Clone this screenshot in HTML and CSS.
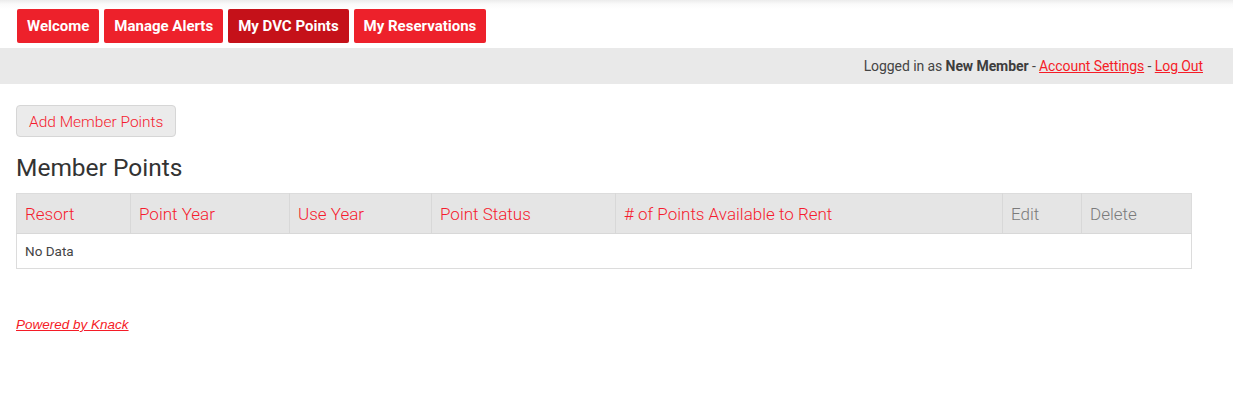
FILE: index.html
```html
<!DOCTYPE html>
<html>
<head>
<meta charset="utf-8">
<link rel="stylesheet" href="styles.css">
</head>
<body>
<header class="top">
  <nav class="nav">
    <a class="nav-btn">Welcome</a>
    <a class="nav-btn">Manage Alerts</a>
    <a class="nav-btn active">My DVC Points</a>
    <a class="nav-btn">My Reservations</a>
  </nav>
</header>
<div class="userbar">
  <span>Logged in as <b>New Member</b> - <a class="link">Account Settings</a> - <a class="link">Log Out</a></span>
</div>
<main class="content">
  <button class="add-btn">Add Member Points</button>
  <h2 class="title">Member Points</h2>
  <table class="grid">
    <colgroup>
      <col class="c1"><col class="c2"><col class="c3"><col class="c4"><col class="c5"><col class="c6"><col class="c7">
    </colgroup>
    <thead>
      <tr>
        <th class="sort">Resort</th>
        <th class="sort">Point Year</th>
        <th class="sort">Use Year</th>
        <th class="sort">Point Status</th>
        <th class="sort"># of Points Available to Rent</th>
        <th class="plain">Edit</th>
        <th class="plain">Delete</th>
      </tr>
    </thead>
    <tbody>
      <tr><td colspan="7">No Data</td></tr>
    </tbody>
  </table>
  <div class="powered"><a class="powered-link">Powered by Knack</a></div>
</main>
</body>
</html>
```
FILE: styles.css
```css
* { box-sizing: border-box; }
html, body { margin: 0; background: #fff; }
body {
  font-family: Roboto, "Noto Sans", sans-serif;
  color: #333;
}
.top {
  padding: 9px 17px 5px;
  background: linear-gradient(to bottom, #ececec 0px, #fafafa 4px, #fff 9px);
}
.nav { display: flex; gap: 5px; }
.nav-btn {
  display: flex;
  align-items: center;
  height: 34px;
  padding: 0 10px;
  background: #ed212b;
  color: #fff;
  font-weight: 700;
  font-size: 15px;
  border-radius: 2px;
  cursor: pointer;
}
.nav-btn.active { background: #c51119; }
.userbar {
  height: 36px;
  background: #e9e9e9;
  display: flex;
  align-items: center;
  justify-content: flex-end;
  padding-right: 30px;
  font-size: 14px;
  color: #444;
}
.userbar span { letter-spacing: -0.08px; }
.userbar b { color: #3d3d3d; }
.link { color: #f51c27; text-decoration: underline; cursor: pointer; }
.content { padding: 21px 16px 0; }
.add-btn {
  display: block;
  height: 32px;
  padding: 1px 12px 0;
  background: #ebebeb;
  border: 1px solid #d6d6d6;
  border-radius: 4px;
  font-family: Roboto, sans-serif;
  font-weight: 300;
  font-size: 15.5px;
  color: #f51c2f;
}
.title {
  margin: 15px 0 0;
  font-size: 24.5px;
  font-weight: 400;
  color: #333;
  line-height: 32px;
}
.grid {
  margin-top: 9px;
  width: 1176px;
  border-collapse: collapse;
  border: 1px solid #dcdcdc;
  table-layout: fixed;
}
.c1 { width: 114px; } .c2 { width: 159px; } .c3 { width: 142px; } .c4 { width: 184px; }
.c5 { width: 387px; } .c6 { width: 79px; } .c7 { width: 110px; }
th {
  height: 40px;
  background: #e5e5e5;
  text-align: left;
  padding: 0 8px;
  font-size: 17px;
  font-weight: 300;
  border-left: 1px solid #d8d8d8;
  border-bottom: 1px solid #d8d8d8;
}
th:first-child { border-left: none; }
th.sort { color: #f51c2f; }
th.plain { color: #7b7b7b; }
td {
  height: 35px;
  padding: 0 8px;
  font-size: 13.5px;
  color: #444;
}
.powered { margin-top: 45px; }
.powered-link {
  font-family: "Liberation Sans", Arial, sans-serif;
  font-style: italic;
  font-size: 13.5px;
  color: #f51c27;
  text-decoration: underline;
}
```
